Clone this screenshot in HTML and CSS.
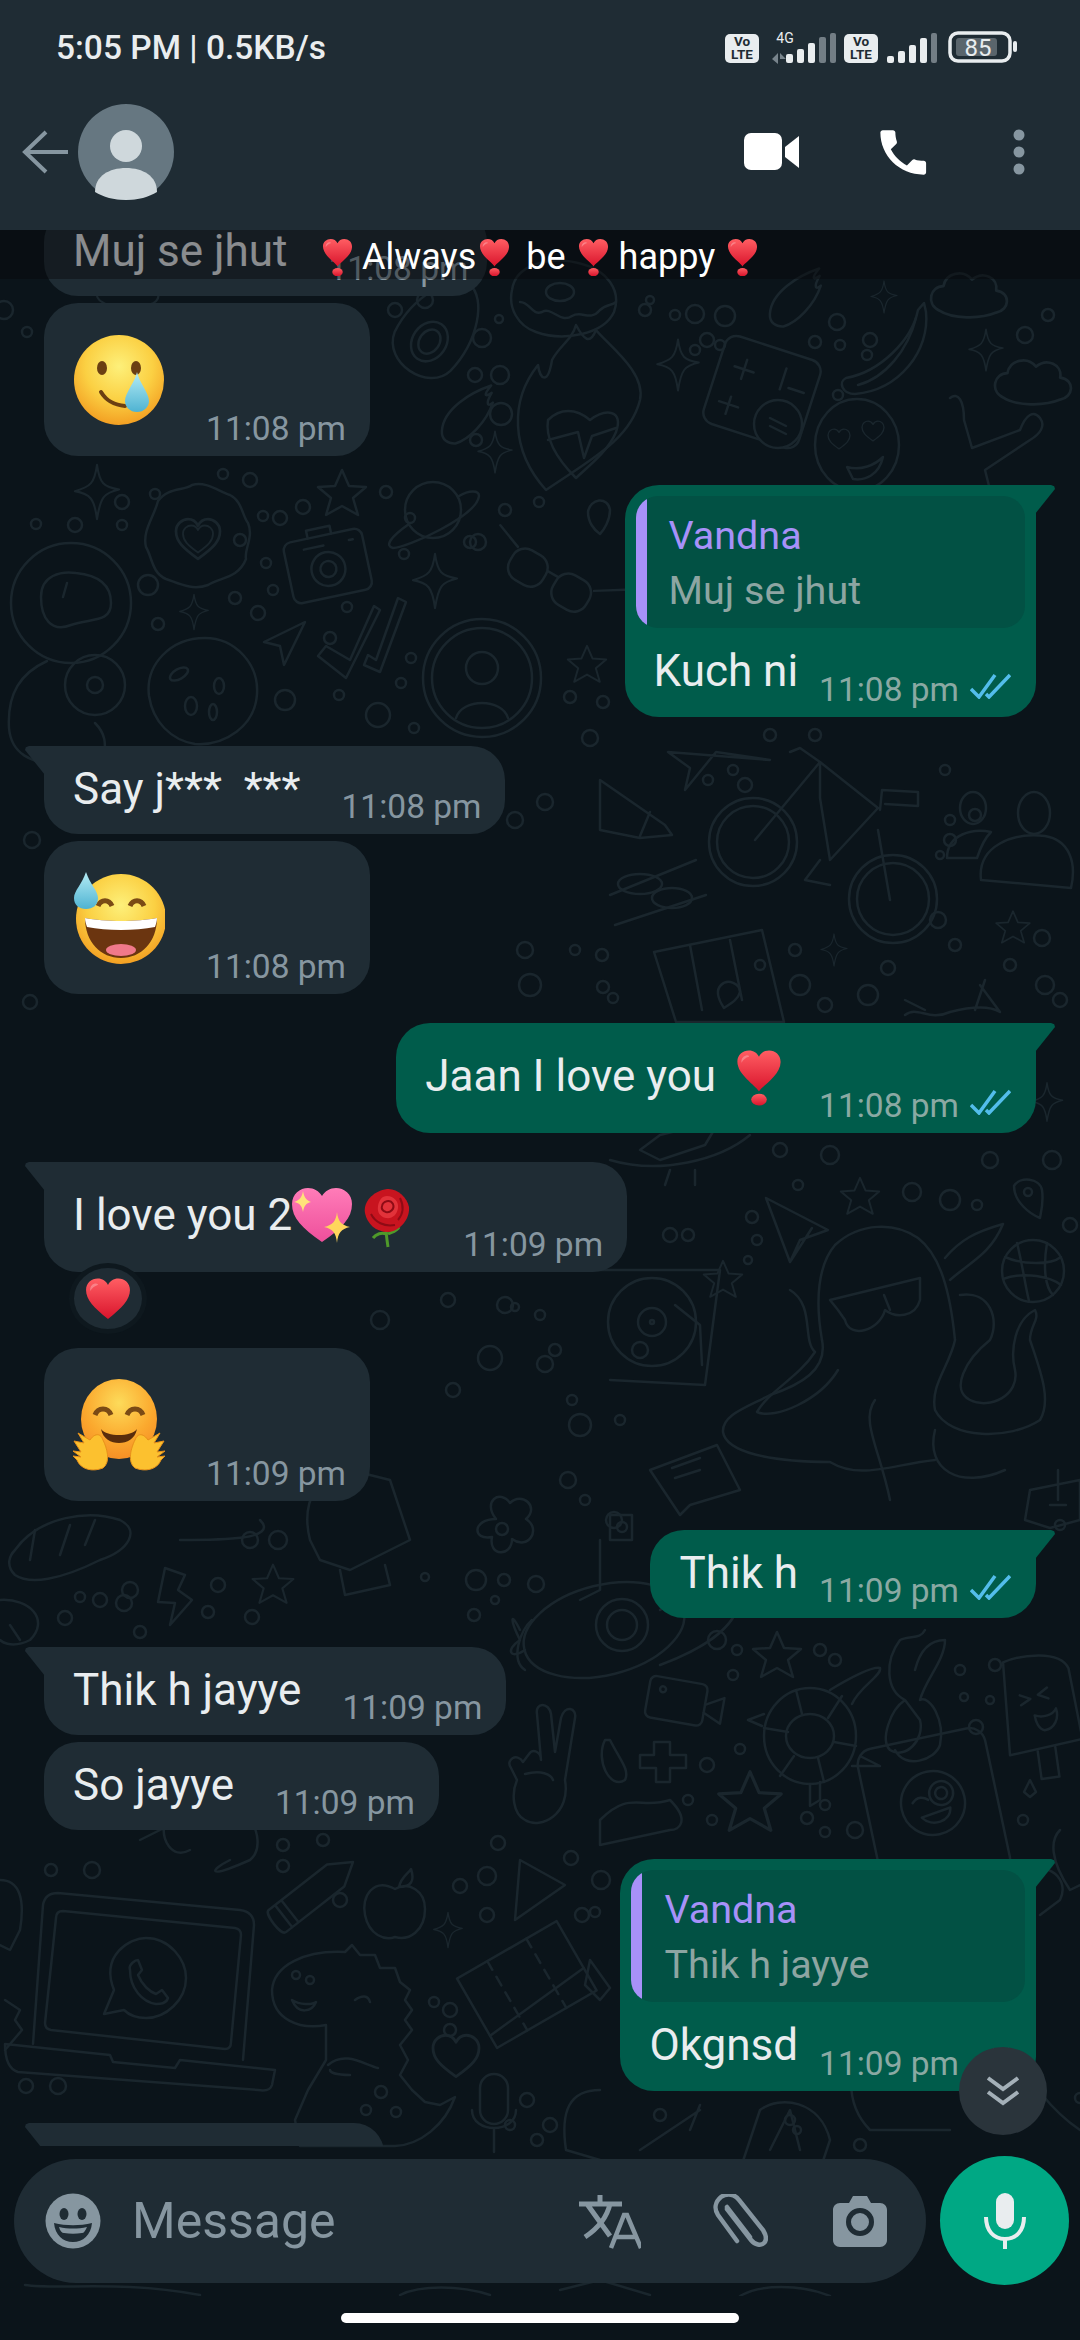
FILE: index.html
```html
<!DOCTYPE html>
<html lang="en">
<head>
    <meta charset="UTF-8">
    <meta name="viewport" content="width=device-width, initial-scale=1.0">
    <title>Chat</title>
    <link rel="stylesheet" href="styles.css">
</head>
<body>
    <!-- shared gradients and emoji -->
    <svg class="defs" aria-hidden="true">
        <defs>
            <radialGradient id="faceFill" cx="50%" cy="35%" r="68%">
                <stop offset="0" stop-color="#fdf07a"/>
                <stop offset=".55" stop-color="#fbd043"/>
                <stop offset="1" stop-color="#f29a1f"/>
            </radialGradient>
            <linearGradient id="redFill" x1="0" y1="0" x2="0" y2="1">
                <stop offset="0" stop-color="#ff5e63"/>
                <stop offset="1" stop-color="#d9142c"/>
            </linearGradient>
            <linearGradient id="pinkFill" x1="0" y1="0" x2="0" y2="1">
                <stop offset="0" stop-color="#ff7cb8"/>
                <stop offset="1" stop-color="#ee4f9b"/>
            </linearGradient>
            <linearGradient id="dropFill" x1="0" y1="0" x2="0" y2="1">
                <stop offset="0" stop-color="#b4ecf5"/>
                <stop offset="1" stop-color="#4fb3d2"/>
            </linearGradient>
            <radialGradient id="hugFill" cx="50%" cy="30%" r="75%">
                <stop offset="0" stop-color="#fddb5a"/>
                <stop offset=".6" stop-color="#fba92e"/>
                <stop offset="1" stop-color="#f58a24"/>
            </radialGradient>
            <symbol id="heart" viewBox="0 0 100 92">
                <path fill="url(#redFill)" d="M50 90C20 66 3 49 3 28 3 12 15 3 28 3c10 0 18 5 22 14C54 8 62 3 72 3c13 0 25 9 25 25 0 21-17 38-47 62Z"/>
                <path fill="#fff" opacity=".28" d="M22 14c-8 2-11 9-10 16 4-7 9-11 16-13 2-2-2-4-6-3Z"/>
            </symbol>
            <symbol id="heartMark" viewBox="0 0 100 126">
                <path fill="url(#redFill)" d="M50 92C42 78 3 56 3 27 3 12 15 3 28 3c10 0 18 5 22 14C54 8 62 3 72 3c13 0 25 9 25 25 0 29-39 51-47 64Z"/>
                <ellipse fill="url(#redFill)" cx="50" cy="110" rx="17" ry="13"/>
                <path fill="#fff" opacity=".28" d="M22 14c-8 2-11 9-10 16 4-7 9-11 16-13 2-2-2-4-6-3Z"/>
            </symbol>
        </defs>
    </svg>

    <header class="header">
        <div class="status">
            <span class="status-text">5:05 PM | 0.5KB/s</span>
            <svg class="status-icons" width="294" height="34" viewBox="0 0 294 34">
                <rect x="1" y="4" width="34" height="29" rx="5" fill="#e9edef"/>
                <text x="18" y="16" class="lte">Vo</text>
                <text x="18" y="29" class="lte">LTE</text>
                <text x="61" y="13" class="four-g">4G</text>
                <path d="M48 29l6-6v11zM56 23l6 6h-6z" fill="#78848c"/>
                <rect x="62" y="24" width="7" height="9" rx="2" fill="#e9edef"/>
                <rect x="73" y="19" width="7" height="14" rx="2" fill="#e9edef"/>
                <rect x="84" y="13" width="7" height="20" rx="2" fill="#e9edef"/>
                <rect x="95" y="7" width="7" height="26" rx="2" fill="#737e85"/>
                <rect x="106" y="3" width="6" height="30" rx="2" fill="#737e85"/>
                <rect x="120" y="4" width="34" height="29" rx="5" fill="#e9edef"/>
                <text x="137" y="16" class="lte">Vo</text>
                <text x="137" y="29" class="lte">LTE</text>
                <rect x="163" y="26" width="7" height="7" rx="2" fill="#e9edef"/>
                <rect x="174" y="21" width="7" height="12" rx="2" fill="#e9edef"/>
                <rect x="185" y="15" width="7" height="18" rx="2" fill="#e9edef"/>
                <rect x="196" y="8" width="7" height="25" rx="2" fill="#e9edef"/>
                <rect x="207" y="3" width="6" height="30" rx="2" fill="#737e85"/>
                <rect x="226" y="3" width="60" height="28" rx="8" fill="none" stroke="#e9edef" stroke-width="3.5"/>
                <rect x="232" y="8" width="41" height="18" rx="3" fill="#5a656c"/>
                <text x="254" y="26" class="batt">85</text>
                <rect x="289" y="11" width="4" height="11" rx="2" fill="#e9edef"/>
            </svg>
        </div>
        <div class="toolbar">
            <svg class="back" width="46" height="44" viewBox="0 0 46 44"><path d="M24 2L3 22l21 20M3 22h43" fill="none" stroke="#8696a0" stroke-width="4"/></svg>
            <svg class="avatar" width="96" height="96" viewBox="0 0 96 96">
                <circle cx="48" cy="48" r="48" fill="#667781"/>
                <ellipse cx="48" cy="42" rx="16" ry="16" fill="#cfd8dc"/>
                <path d="M17 88c0-16 14-24 31-24s31 8 31 24c-8 5-19 8-31 8s-23-3-31-8Z" fill="#cfd8dc"/>
            </svg>
            <div class="tool-icons">
                <svg width="56" height="38" viewBox="0 0 56 38"><rect x="0" y="0" width="38" height="37" rx="7" fill="#fff"/><path d="M41 14L55 3v32L41 24z" fill="#fff"/></svg>
                <svg class="tool-phone" width="59" height="59" viewBox="0 0 24 24"><path fill="#fff" d="M20.6 15.4c-1.2 0-2.5-.2-3.6-.6-.35-.1-.75-.03-1 .25l-2.2 2.2c-2.8-1.45-5.1-3.7-6.55-6.55l2.2-2.2c.3-.3.35-.65.25-1-.4-1.1-.6-2.4-.6-3.6 0-.55-.45-1-1-1H4c-.55 0-1 .45-1 1C3 13.3 10.7 21 20.6 21c.55 0 1-.45 1-1v-3.6c0-.55-.45-1-1-1Z"/></svg>
                <svg class="tool-dots" width="12" height="46" viewBox="0 0 12 46"><circle cx="6" cy="6" r="5.5" fill="#8696a0"/><circle cx="6" cy="23" r="5.5" fill="#8696a0"/><circle cx="6" cy="40" r="5.5" fill="#8696a0"/></svg>
            </div>
        </div>
    </header>

    <main class="chat">
        <!-- wallpaper, drawn at page coordinates -->
        <svg class="wallpaper" width="1080" height="2066" viewBox="0 230 1080 2066" aria-hidden="true">
            <defs>
                <path id="sp" d="M0-32C3-10 8-6 26-3 8 1 4 6 0 32-3 8-8 2-26-1-8-6-3-10 0-32Z"/>
                <path id="st" d="M0-24L7-8 24-7 11 4 16 21 0 12-16 21-11 4-24-7-7-8Z"/>
                <path id="ht" d="M0 18C-14 8-20 2-20-7-20-14-14-18-9-18-5-18-2-16 0-12 2-16 5-18 9-18 14-18 20-14 20-7 20 2 14 8 0 18Z"/>
                <path id="cl" d="M-30 14C-42 8-38-8-26-8-24-20-8-24 0-14 10-22 24-16 22-4 36-2 34 14 22 16 8 22-18 22-30 14Z"/>
            </defs>
            <g fill="none" stroke="#1a262d" stroke-width="2.5" stroke-linejoin="round" stroke-linecap="round">
                <!-- top right -->
                <g transform="translate(564,298)"><path d="M-52-8C-48-36-10-42 18-34 42-28 58-8 50 14 40 36 0 44-28 34-46 28-56 10-52-8Z"/><ellipse cx="-4" cy="-6" rx="14" ry="9"/><path d="M-44 4C-34 4-32 18-22 14-12 8-4 26 8 18 18 12 26 24 36 12 42 6 48 8 52 4"/></g>
                <g transform="translate(434,335) rotate(35)"><path d="M-34 20C-40-20-20-60 0-62 22-60 40-20 34 20 28 50-26 52-34 20Z"/><ellipse cx="0" cy="8" rx="17" ry="21"/><ellipse cx="0" cy="8" rx="10" ry="13"/></g>
                <g transform="translate(797,295) rotate(30)"><path d="M-14 30C-24 10-8-18 6-34 4-22 6-20 10-28 10-14 14-14 16-20 20 0 14 24 4 34-2 38-10 38-14 30Z"/></g>
                <g transform="translate(469,412) rotate(30)"><path d="M-14 30C-24 10-8-18 6-34 4-22 6-20 10-28 10-14 14-14 16-20 20 0 14 24 4 34-2 38-10 38-14 30Z"/></g>
                <path d="M846 378C880 372 912 340 918 310L924 303 926 312C930 350 900 390 855 394 842 394 838 382 846 378Z"/>
                <path d="M858 385C885 378 908 350 916 318"/>
                <use href="#cl" transform="translate(972,295) scale(1.1)"/>
                <use href="#cl" transform="translate(1036,382) scale(1.1)"/>
                <use href="#cl" transform="translate(130,290) scale(.9)"/>
                <g transform="translate(762,392) rotate(18)"><rect x="-50" y="-46" width="100" height="92" rx="12"/><path d="M-24-26V-6M-34-16H-14M16-30V-8M-28 14V32M-38 22H-18M24-12h16"/></g>
                <g transform="translate(778,424)"><circle r="24" fill="#0b141a"/><path d="M-8-6L8 2M-8 2L8 10"/></g>
                <path d="M546 490C510 450 510 400 538 365 540 380 548 385 552 360 560 345 572 340 576 325 584 340 590 345 596 330 608 345 646 372 640 400 630 440 590 460 546 490Z"/>
                <path d="M548 420C560 408 576 408 590 420 606 408 624 410 616 432 608 452 586 468 576 478 566 468 544 445 548 420Z"/>
                <path d="M548 440l30-8 6 26 8-22 24-8"/>
                <g transform="translate(857,445)"><ellipse rx="42" ry="46"/><use href="#ht" transform="translate(-18,-6) scale(.55)"/><use href="#ht" transform="translate(16,-14) scale(.55)"/><path d="M-10 22C4 26 18 20 26 12 22 30 8 36-4 34Z"/></g>
                <path d="M950 398C958 392 964 400 964 420L972 448 1020 430C1026 414 1034 410 1040 418 1046 426 1040 434 1030 440L985 470 990 490"/>
                <use href="#sp" transform="translate(678,365) scale(.8)"/>
                <use href="#sp" transform="translate(986,350) scale(.65)"/>
                <use href="#sp" transform="translate(884,297) scale(.5)"/>
                <use href="#sp" transform="translate(495,452) scale(.65)"/>
                <!-- astronaut, cookie row -->
                <g transform="translate(71,603)"><ellipse rx="60" ry="60"/><path d="M-30-6C-30-28-10-32 5-30 25-28 40-20 40 0 40 20 20 15 0 22-20 30-30 15-30-6Z"/><path d="M-8-6L-4-20M-24 58C-50 70-64 90-62 125-60 150-40 162-10 160L32 158C36 140 34 130 24 120"/><circle cx="24" cy="82" r="30"/><circle cx="24" cy="82" r="8"/></g>
                <g transform="translate(198,537)"><path d="M-40-36C-30-50-14-46-6-52 8-56 20-46 32-42 44-36 44-22 50-14 56 0 46 12 48 22 40 42 22 40 10 48-6 54-20 46-32 42-46 36-46 20-52 10-56-6-44-20-40-36Z"/><use href="#ht" transform="translate(0,2) scale(1.1)"/><use href="#ht" transform="translate(0,2) scale(.75)"/></g>
                <g transform="translate(433,510)"><circle r="28"/><path d="M-24 14C-44 28-48 36-40 38-26 38 44 6 46-14 46-20 36-20 26-14"/></g>
                <g transform="translate(328,567) rotate(-12)"><rect x="-40" y="-32" width="80" height="62" rx="8"/><circle r="17" cy="2"/><circle r="8" cy="2"/><path d="M-14-32V-40H10V-32M-20-22H0M26-22h4"/></g>
                <g transform="translate(549,581) rotate(30)"><rect x="-44" y="-18" width="38" height="34" rx="14"/><rect x="6" y="-18" width="38" height="34" rx="14"/><path d="M-6-8H6M-44-14L-70-24M44-14L76-34"/></g>
                <g transform="translate(482,678)"><circle r="59"/><circle r="50"/><circle r="16" cy="-10"/><path d="M-26 40C-20 20 20 20 26 40"/></g>
                <path d="M318 656L346 678 380 610 374 606 350 660 326 646ZM364 665L380 672 406 602 398 598 376 660 368 655Z"/>
                <path d="M264 642L305 622 284 665 280 646Z"/>
                <g transform="translate(201,688)"><path d="M-52 8C-56-24-30-50 4-50 34-50 58-24 56 6 54 38 24 58-6 56-30 52-48 34-52 8Z"/><ellipse cx="-22" cy="-14" rx="10" ry="5" transform="rotate(-30 -22 -14)"/><ellipse cx="18" cy="-2" rx="5" ry="8"/><ellipse cx="-10" cy="18" rx="6" ry="9"/><ellipse cx="12" cy="24" rx="4" ry="8"/></g>
                <use href="#sp" transform="translate(97,492) scale(.85)"/>
                <use href="#sp" transform="translate(435,581) scale(.85)"/>
                <use href="#sp" transform="translate(194,612) scale(.55)"/>
                <use href="#st" transform="translate(342,494) scale(1)"/>
                <use href="#st" transform="translate(587,665) scale(.8)"/>
                <path d="M588 512C590 498 608 496 610 510 610 520 604 530 600 534 594 530 588 522 588 512Z"/>
                <!-- bicycle and friends -->
                <g transform="translate(753,842)"><circle r="44"/><circle r="36"/></g>
                <g transform="translate(893,899)"><circle r="44"/><circle r="36"/></g>
                <path d="M755 840L820 762 800 748 790 752M820 762L878 808 830 860 820 798ZM880 810L882 790 918 792 918 806 885 804M878 830L890 900M820 860L805 880 830 885"/>
                <path d="M600 780L665 825 672 835 640 838 600 830ZM640 836L650 812"/>
                <path d="M610 895L696 860M615 925L706 895"/>
                <ellipse cx="640" cy="884" rx="22" ry="10"/><ellipse cx="672" cy="898" rx="20" ry="10"/>
                <path d="M654 952L762 930 784 1022 676 1022ZM690 945L702 1010M730 940L742 1000"/>
                <path d="M721 985C728 978 740 984 740 992 738 1000 730 1004 724 1008 720 1002 714 992 721 985Z"/>
                <g transform="translate(1013,858)"><ellipse cx="-40" cy="-50" rx="13" ry="16"/><ellipse cx="21" cy="-45" rx="16" ry="21"/><path d="M-66 0C-66-24-40-30-22-26-30-18-34-6-36 0ZM-32 22C-36-12 0-26 32-22 56-18 64 4 58 30Z"/></g>
                <path d="M905 1015C918 1005 928 1022 950 1012 974 1006 990 1006 1000 1012L980 985M905 1000L925 1010M975 1010L985 980"/>
                <path d="M770 760L716 752 685 790 690 768 668 752Z"/>
                <use href="#sp" transform="translate(834,950) scale(.5)"/>
                <use href="#st" transform="translate(1013,928) scale(.7)"/>
                <!-- between right bubbles -->
                <path d="M610 1160C660 1175 720 1160 750 1135M640 1150L660 1135 720 1120 705 1145 660 1160ZM665 1185l5-15M695 1185v-15"/>
                <use href="#st" transform="translate(860,1197) scale(.8)"/>
                <path d="M1014 1186C1020 1176 1040 1178 1042 1190 1044 1204 1040 1216 1040 1218 1030 1214 1014 1202 1014 1186Z"/><circle cx="1028" cy="1192" r="4"/>
                <path d="M766 1198L828 1230 800 1240 790 1262ZM790 1262L812 1228"/>
                <g transform="translate(1033,1271)"><ellipse rx="31" ry="31"/><path d="M-28-14C-10-6 18-6 28-14M-30 8C-8 0 18 6 28 14M-16-28C-10-4-8 14-4 30M14-28C10-4 12 16 20 24"/></g>
                <use href="#sp" transform="translate(1047,1102) scale(.6)"/>
                <!-- octopus -->
                <path d="M822 1340C815 1300 818 1265 835 1245 860 1222 895 1222 918 1238 940 1255 950 1290 955 1340"/>
                <path d="M830 1300L920 1278 920 1300C915 1318 895 1318 885 1310 880 1330 850 1340 845 1320L838 1310ZM884 1295L890 1310"/>
                <path d="M822 1340C828 1370 800 1385 770 1395 745 1408 722 1415 723 1432 726 1452 770 1462 830 1462"/>
                <path d="M790 1290C815 1305 802 1340 815 1352 798 1378 770 1390 757 1412 775 1420 820 1400 838 1370"/>
                <path d="M955 1340C950 1365 930 1385 935 1410 950 1440 1010 1440 1040 1420 1052 1400 1040 1370 1030 1340 1030 1325 1040 1320 1035 1310 1015 1320 1010 1350 1015 1370 1020 1395 990 1410 970 1400 950 1390 965 1360 990 1340 1000 1320 990 1290 960 1295"/>
                <path d="M950 1280C970 1262 990 1255 1003 1224 975 1232 960 1240 945 1258"/>
                <path d="M935 1430C925 1470 960 1490 1005 1470M875 1400C860 1420 880 1450 890 1500M830 1462C860 1480 890 1465 935 1460"/>
                <!-- record player -->
                <path d="M600 1270L720 1270 705 1385 610 1380"/><circle cx="652" cy="1322" r="44"/><circle cx="652" cy="1322" r="14"/><circle cx="652" cy="1322" r="2"/>
                <path d="M675 1305L700 1325 702 1365"/><use href="#st" transform="translate(723,1280) scale(.8)"/>
                <path d="M650 1470L717 1445 740 1490 690 1505 680 1515 670 1500ZM672 1468L700 1458M675 1478L700 1470"/>
                <path d="M1030 1490L1080 1480V1520L1050 1528 1025 1520ZM1058 1470V1500M1050 1505h16"/>
                <!-- left column lower -->
                <path d="M15 1550C40 1515 90 1510 120 1520 140 1530 130 1550 100 1560 60 1580 30 1585 15 1575 5 1565 10 1555 15 1550Z"/>
                <path d="M30 1560L35 1530M60 1555L70 1525M85 1545L95 1520"/>
                <path d="M165 1568L185 1575 178 1590 192 1600 170 1625 175 1603 158 1602Z"/>
                <use href="#st" transform="translate(273,1585) scale(.85)"/>
                <g transform="translate(502,1529)"><path d="M-6-10C-20-28-2-40 8-26 20-38 38-22 24-10 40 0 26 22 10 10 10 28-14 28-10 8-30 12-30-10-6-10Z"/><circle r="6"/></g>
                <path d="M310 1540C300 1500 320 1470 350 1470L390 1480 410 1540 350 1570 320 1560ZM340 1570L345 1595 390 1585 385 1565"/>
                <path d="M0 1600C30 1598 50 1620 30 1640 10 1650 0 1640 0 1640M10 1625L20 1640"/>
                <path d="M260 1520C280 1540 220 1540 180 1540"/>
                <!-- plane, propeller -->
                <path d="M660 1610C690 1590 730 1580 740 1600 735 1630 700 1650 660 1665M532 1620C520 1630 510 1660 525 1670"/>
                <g transform="translate(604,1630)"><ellipse rx="82" ry="45" transform="rotate(-14)"/><circle cx="18" cy="-5" r="26"/><circle cx="18" cy="-5" r="15"/></g>
                <path d="M520 1630C510 1610 510 1620 520 1640 505 1650 510 1660 525 1650"/>
                <path d="M600 1540V1590L580 1600M610 1515h22v25h-22z"/>
                <g transform="translate(810,1736)"><ellipse rx="46" ry="48"/><ellipse rx="24" ry="22"/><path d="M-22-4L-46-8M-8-22L-14-46M18-18L32-40M24 6L46 10M8 22L14 46M-16 20L-30 40M-48-10L-62-16-46-22M0 48V70L10 64V46M42 30L70 30 50 20M20-46C30-52 60-70 70-68 72-60 50-50 42-32"/></g>
                <path d="M905 1700C885 1690 885 1660 900 1640 910 1635 920 1640 925 1630M905 1700C890 1710 880 1740 890 1750 905 1760 925 1740 920 1720ZM920 1700C930 1695 945 1720 940 1745 935 1760 905 1770 895 1750M920 1700C925 1680 945 1660 945 1640 930 1640 920 1650 915 1670"/>
                <g transform="translate(1037,1703) rotate(-8)"><path d="M-28-45C-10-50 30-50 36-30L40 42-34 48Z"/><path d="M-6 48V76H12V46M-16-10l10 5-10 5M12-14l-10 6 10 5M-4 12C4 16 14 14 18 8 20 18 14 28 4 28-2 26-4 18-4 12Z"/></g>
                <g transform="translate(683,1703) rotate(10)"><rect x="-36" y="-22" width="58" height="42" rx="6"/><path d="M22-2L40-12V14L22 6"/><circle cx="-22" cy="-10" r="3"/></g>
                <path d="M654 1742V1755H640V1768H656V1782H670V1768H686V1755H670V1742Z"/>
                <path d="M610 1740C620 1760 630 1770 625 1780 610 1790 595 1760 605 1740Z"/>
                <use href="#st" transform="translate(750,1803) scale(1.3)"/>
                <use href="#st" transform="translate(777,1656) scale(1)"/>
                <g transform="translate(933,1803) rotate(-12)"><rect x="-66" y="-66" width="130" height="150" rx="16"/><circle r="32"/><circle cx="10" cy="-8" r="6"/><circle cx="10" cy="-8" r="12"/><path d="M-20-4C-14-10-8-8-4-4M-14 12L16 8C14 22-6 24-14 12Z"/></g>
                <path d="M600 1820C630 1790 640 1810 670 1800 690 1820 680 1830 670 1830L600 1845Z"/>
                <path d="M1030 1780l-6 12 6 5 6-5Z"/>
                <path d="M1060 1830C1050 1840 1050 1860 1070 1890L1080 1885"/>
                <!-- laptop, logo, dino -->
                <path d="M33 2044L43 1905Q45 1893 58 1893L240 1910Q254 1912 254 1925L243 2060"/>
                <path d="M56 1918Q56 1911 63 1911L235 1928Q241 1929 241 1935L231 2042Q231 2049 225 2049L51 2030Q45 2029 45 2023Z"/>
                <path d="M5 2044L110 2055 113 2062 175 2068 180 2060 275 2070 272 2085Q270 2092 258 2090L18 2072Q5 2068 5 2044Z"/>
                <path d="M104 2014L114 1990C100 1955 130 1938 146 1938 170 1938 186 1960 186 1978 186 2000 166 2018 146 2018 134 2018 128 2014 124 2010Z"/>
                <path d="M130 1970C128 1964 136 1960 138 1960L142 1970 138 1975C142 1985 150 1992 156 1994L162 1990 168 1998C166 2004 160 2004 156 2004 142 2002 130 1988 130 1970Z"/>
                <path d="M326 2025C300 2030 272 2020 272 1990 274 1965 305 1950 345 1952 L352 1945 360 1955 375 1955 380 1968 395 1968 400 1982 410 1990 405 2000 412 2010 405 2020 412 2030 400 2045 408 2060 400 2075 412 2090 425 2102 440 2105 455 2097C445 2125 420 2145 395 2146H300L295 2120 308 2090 326 2060Z"/>
                <path d="M292 2000C300 2005 312 2005 316 2002 312 2012 298 2015 292 2000ZM355 2000C362 1995 368 1995 370 2002M328 2065C345 2050 365 2065 378 2068M330 2070C330 2072 335 2075 350 2075"/>
                <circle cx="296" cy="1975" r="4"/><circle cx="310" cy="1980" r="4"/>
                <g transform="translate(312,1894) rotate(-38)"><path d="M-44-14H30L52 0 30 14H-44C-50 14-50-14-44-14ZM-28-14V14M-36-14V14"/></g>
                <g transform="translate(395,1911)"><path d="M0-22C-22-34-34-14-30 4-26 24-10 30 0 26 14 30 30 20 30-2 30-20 14-30 0-22ZM4-24C6-34 14-38 16-42 20-30 16-24 4-24Z"/></g>
                <g transform="translate(541,1774)"><path d="M-24 6L-30-6C-36-14-24-22-18-12L-12-20C-8-26 0-22 0-14L-4-60C-6-72 8-72 10-60L14-22 20-56C24-70 36-66 34-56L24 6C30 40 0 56-16 46-28 40-30 20-24 6ZM-16 0C0-4 10 0 12 6"/></g>
                <g transform="translate(530,1985) rotate(-30)"><rect x="-60" y="-42" width="115" height="80"/><path d="M-25-42V38M20-42V38" stroke-dasharray="10 8"/><path d="M-60 24L55 12"/></g>
                <use href="#ht" transform="translate(456,2056) scale(1.15)"/>
                <g transform="translate(494,2106)"><rect x="-14" y="-32" width="28" height="50" rx="14"/><path d="M-22 4C-22 28 22 28 22 4M0 24V46"/></g>
                <use href="#sp" transform="translate(448,1930) scale(.55)"/>
                <path d="M520 1860L565 1885 515 1920Z"/>
                <path d="M190 1850C172 1860 160 1840 165 1820M230 1860C210 1870 205 1880 250 1860 262 1850 258 1830 250 1820M140 1840L200 1810"/>
                <path d="M590 1960L610 1988 600 2000 585 1985ZM0 1880C20 1880 25 1900 20 1930L10 1950 0 1945"/>
                <path d="M5 2000L20 2010 15 2020 22 2030 5 2050"/>
                <path d="M600 2090C570 2090 560 2110 566 2150L600 2160"/>
                <path d="M640 2150L700 2110M680 2090H780L830 2060M700 2105L690 2130"/>
                <path d="M740 2170L760 2110C780 2095 820 2100 830 2140L820 2170M770 2150L790 2110 800 2150"/>
                <path d="M870 2030C850 2050 840 2100 870 2130H950"/>
                <path d="M1010 2050C1030 2080 1050 2110 1080 2130M1020 1870C1050 1860 1070 1880 1060 1900L1040 1915"/>
                <!-- low band -->
                <path d="M25 2285C60 2290 120 2280 200 2295M400 2295C420 2285 460 2285 490 2295M560 2290L600 2280 650 2295M740 2296C760 2284 800 2284 830 2296"/>
                <!-- small bubbles -->
                <g>
                    <circle cx="4" cy="310" r="9"/><circle cx="27" cy="332" r="5"/><circle cx="395" cy="310" r="7"/><circle cx="425" cy="300" r="8"/><circle cx="482" cy="338" r="9"/><circle cx="499" cy="319" r="4"/><circle cx="475" cy="375" r="7"/><circle cx="500" cy="375" r="9"/><circle cx="476" cy="440" r="6"/><circle cx="501" cy="414" r="11"/>
                    <circle cx="675" cy="315" r="5"/><circle cx="695" cy="314" r="9"/><circle cx="725" cy="316" r="10"/><circle cx="707" cy="340" r="7"/><circle cx="720" cy="345" r="5"/><circle cx="645" cy="310" r="6"/><circle cx="695" cy="350" r="5"/><circle cx="650" cy="300" r="4"/><circle cx="837" cy="322" r="8"/><circle cx="815" cy="342" r="6"/><circle cx="840" cy="345" r="5"/><circle cx="870" cy="340" r="7"/><circle cx="838" cy="395" r="5"/><circle cx="867" cy="355" r="5"/><circle cx="1025" cy="335" r="8"/><circle cx="1048" cy="315" r="6"/>
                    <circle cx="1060" cy="1000" r="7"/><circle cx="240" cy="540" r="6"/><circle cx="250" cy="480" r="7"/><circle cx="280" cy="518" r="7"/><circle cx="303" cy="507" r="7"/><circle cx="263" cy="516" r="5"/><circle cx="223" cy="474" r="5"/><circle cx="386" cy="492" r="6"/><circle cx="122" cy="502" r="7"/><circle cx="155" cy="494" r="5"/><circle cx="148" cy="585" r="10"/><circle cx="36" cy="524" r="5"/><circle cx="75" cy="525" r="7"/><circle cx="122" cy="525" r="5"/>
                    <circle cx="266" cy="563" r="5"/><circle cx="273" cy="590" r="5"/><circle cx="235" cy="598" r="6"/><circle cx="258" cy="613" r="7"/><circle cx="158" cy="624" r="6"/><circle cx="347" cy="607" r="5"/><circle cx="330" cy="638" r="6"/><circle cx="470" cy="542" r="6"/><circle cx="478" cy="542" r="8"/><circle cx="404" cy="554" r="5"/><circle cx="410" cy="518" r="5"/><circle cx="505" cy="510" r="6"/><circle cx="539" cy="502" r="5"/><circle cx="411" cy="658" r="5"/><circle cx="401" cy="683" r="5"/><circle cx="339" cy="695" r="5"/><circle cx="285" cy="700" r="10"/><circle cx="378" cy="715" r="12"/><circle cx="414" cy="728" r="5"/><circle cx="570" cy="697" r="6"/><circle cx="603" cy="702" r="6"/><circle cx="590" cy="738" r="8"/>
                    <circle cx="32" cy="840" r="8"/><circle cx="515" cy="820" r="8"/><circle cx="545" cy="802" r="8"/><circle cx="30" cy="1002" r="7"/><circle cx="525" cy="950" r="8"/><circle cx="575" cy="950" r="5"/><circle cx="602" cy="955" r="6"/><circle cx="530" cy="985" r="11"/><circle cx="603" cy="987" r="6"/><circle cx="613" cy="998" r="5"/>
                    <circle cx="708" cy="780" r="5"/><circle cx="745" cy="785" r="7"/><circle cx="770" cy="735" r="6"/><circle cx="815" cy="735" r="6"/><circle cx="733" cy="770" r="5"/><circle cx="945" cy="770" r="5"/><circle cx="950" cy="820" r="5"/><circle cx="950" cy="840" r="6"/><circle cx="940" cy="855" r="4"/><circle cx="975" cy="815" r="6"/><circle cx="938" cy="920" r="8"/><circle cx="955" cy="945" r="6"/><circle cx="1042" cy="938" r="8"/><circle cx="1045" cy="985" r="9"/><circle cx="1010" cy="965" r="6"/><circle cx="760" cy="965" r="5"/><circle cx="795" cy="950" r="6"/><circle cx="800" cy="985" r="10"/><circle cx="825" cy="1005" r="7"/><circle cx="868" cy="995" r="10"/><circle cx="888" cy="968" r="7"/>
                    <circle cx="780" cy="1150" r="7"/><circle cx="798" cy="1185" r="5"/><circle cx="830" cy="1155" r="9"/><circle cx="912" cy="1192" r="9"/><circle cx="950" cy="1200" r="10"/><circle cx="977" cy="1205" r="5"/><circle cx="990" cy="1160" r="8"/><circle cx="1052" cy="1160" r="9"/><circle cx="1070" cy="1225" r="7"/><circle cx="670" cy="1235" r="7"/><circle cx="688" cy="1235" r="6"/><circle cx="752" cy="1217" r="6"/><circle cx="757" cy="1240" r="5"/><circle cx="748" cy="1260" r="4"/>
                    <circle cx="435" cy="1232" r="11"/><circle cx="380" cy="1320" r="9"/><circle cx="448" cy="1300" r="7"/><circle cx="490" cy="1358" r="12"/><circle cx="545" cy="1364" r="8"/><circle cx="453" cy="1390" r="7"/><circle cx="505" cy="1305" r="8"/><circle cx="515" cy="1307" r="4"/><circle cx="555" cy="1350" r="6"/><circle cx="540" cy="1315" r="5"/><circle cx="572" cy="1400" r="5"/><circle cx="580" cy="1425" r="11"/><circle cx="568" cy="1480" r="8"/><circle cx="585" cy="1500" r="5"/><circle cx="620" cy="1420" r="5"/><circle cx="640" cy="1350" r="8"/>
                    <circle cx="250" cy="1540" r="8"/><circle cx="278" cy="1540" r="9"/><circle cx="130" cy="1590" r="8"/><circle cx="218" cy="1585" r="7"/><circle cx="100" cy="1600" r="7"/><circle cx="124" cy="1603" r="8"/><circle cx="80" cy="1597" r="5"/><circle cx="65" cy="1618" r="7"/><circle cx="140" cy="1632" r="6"/><circle cx="208" cy="1612" r="6"/><circle cx="252" cy="1617" r="7"/><circle cx="476" cy="1580" r="10"/><circle cx="504" cy="1580" r="6"/><circle cx="536" cy="1584" r="8"/><circle cx="495" cy="1600" r="4"/><circle cx="474" cy="1615" r="6"/><circle cx="425" cy="1577" r="4"/>
                    <circle cx="283" cy="1845" r="6"/><circle cx="323" cy="1840" r="6"/><circle cx="498" cy="1843" r="7"/><circle cx="571" cy="1858" r="7"/><circle cx="601" cy="1880" r="9"/><circle cx="487" cy="1876" r="9"/><circle cx="460" cy="1886" r="7"/><circle cx="487" cy="1915" r="7"/><circle cx="595" cy="1912" r="5"/><circle cx="582" cy="1915" r="7"/><circle cx="283" cy="1866" r="6"/><circle cx="51" cy="1870" r="6"/><circle cx="92" cy="1870" r="8"/><circle cx="340" cy="1900" r="7"/><circle cx="434" cy="2002" r="5"/><circle cx="450" cy="2010" r="7"/><circle cx="450" cy="2030" r="6"/><circle cx="381" cy="2092" r="6"/><circle cx="366" cy="2110" r="5"/><circle cx="396" cy="2112" r="5"/><circle cx="527" cy="2100" r="7"/><circle cx="550" cy="2125" r="7"/><circle cx="537" cy="2140" r="6"/><circle cx="58" cy="2086" r="8"/><circle cx="26" cy="2086" r="7"/>
                    <circle cx="717" cy="1640" r="9"/><circle cx="737" cy="1650" r="5"/><circle cx="733" cy="1675" r="5"/><circle cx="820" cy="1650" r="6"/><circle cx="835" cy="1660" r="6"/><circle cx="960" cy="1670" r="5"/><circle cx="995" cy="1665" r="6"/><circle cx="964" cy="1697" r="4"/><circle cx="990" cy="1700" r="4"/><circle cx="976" cy="1727" r="7"/><circle cx="707" cy="1765" r="7"/><circle cx="740" cy="1749" r="5"/><circle cx="688" cy="1800" r="5"/><circle cx="712" cy="1820" r="5"/><circle cx="807" cy="1818" r="6"/><circle cx="825" cy="1805" r="5"/><circle cx="825" cy="1832" r="5"/><circle cx="855" cy="1830" r="8"/><circle cx="1023" cy="1820" r="5"/><circle cx="614" cy="1520" r="8"/><circle cx="622" cy="1527" r="5"/><circle cx="1060" cy="1525" r="5"/>
                    <circle cx="660" cy="2115" r="6"/><circle cx="790" cy="2120" r="5"/><circle cx="1080" cy="2098" r="5"/><circle cx="510" cy="2125" r="5"/><circle cx="1030" cy="2200" r="6"/><circle cx="860" cy="2145" r="6"/><circle cx="797" cy="2130" r="4"/>
                </g>
            </g>
        </svg>

        <div class="messages">
            <div class="msg in cut-top">
                <div class="line"><span class="text">Muj se jhut</span><span class="time">11:08 pm</span></div>
            </div>
            <div class="msg in next big">
                <div class="line">
                    <svg class="emoji" viewBox="0 0 92 92">
                        <circle cx="46" cy="46" r="45" fill="url(#faceFill)"/>
                        <ellipse cx="29" cy="34" rx="5" ry="7" fill="#6b3f12"/>
                        <ellipse cx="63" cy="34" rx="5" ry="7" fill="#6b3f12"/>
                        <path d="M28 58c6 10 14 13 24 14" fill="none" stroke="#6b3f12" stroke-width="4" stroke-linecap="round"/>
                        <path d="M64 38c2 10 12 21 12 29 0 6-5 11-12 11s-12-5-12-11c0-8 10-19 12-29Z" fill="url(#dropFill)"/>
                    </svg>
                    <span class="time">11:08 pm</span>
                </div>
            </div>

            <div class="msg out first">
                <div class="reply"><span class="reply-name">Vandna</span><span class="reply-text">Muj se jhut</span></div>
                <div class="line after-reply">
                    <span class="text">Kuch ni</span>
                    <span class="time">11:08 pm</span>
                    <svg class="ticks" viewBox="0 0 41 26"><path d="M1 16l8 8L25 2M16 21l3 3L40 2" fill="none" stroke="#53bdeb" stroke-width="3.5"/></svg>
                </div>
            </div>

            <div class="msg in first">
                <div class="line"><span class="text">Say j*** &nbsp;***</span><span class="time">11:08 pm</span></div>
            </div>
            <div class="msg in next big">
                <div class="line">
                    <svg class="emoji" viewBox="0 0 92 92">
                        <circle cx="48" cy="47" r="45" fill="url(#faceFill)"/>
                        <path d="M25 34c3-7 11-7 14 0M57 34c3-7 11-7 14 0" fill="none" stroke="#7a4a15" stroke-width="5"/>
                        <path d="M12 46c20 4 52 4 72 0 0 24-16 40-36 40S12 70 12 46Z" fill="#6b3510"/>
                        <path d="M12 46c20 4 52 4 72 0 0 3-1 6-2 9-20 4-48 4-68 0-1-3-2-6-2-9Z" fill="#fff"/>
                        <ellipse cx="48" cy="78" rx="15" ry="6" fill="#f0798a"/>
                        <path d="M13 0c4 12 12 19 12 26 0 7-5 11-12 11S1 33 1 26C1 19 9 12 13 0Z" fill="url(#dropFill)"/>
                    </svg>
                    <span class="time">11:08 pm</span>
                </div>
            </div>

            <div class="msg out first tall">
                <div class="line">
                    <span class="text">Jaan I love you</span>
                    <svg class="mark" viewBox="0 0 100 126"><use href="#heartMark"/></svg>
                    <span class="time">11:08 pm</span>
                    <svg class="ticks" viewBox="0 0 41 26"><path d="M1 16l8 8L25 2M16 21l3 3L40 2" fill="none" stroke="#53bdeb" stroke-width="3.5"/></svg>
                </div>
            </div>

            <div class="msg in first tall has-reaction">
                <div class="line">
                    <span class="text">I love you 2</span>
                    <svg class="sparkle-heart" viewBox="0 0 60 56">
                        <path d="M30 54C10 40 0 30 0 16 0 6 8 0 16 0c6 0 11 3 14 8 3-5 8-8 14-8 8 0 16 6 16 16 0 14-10 24-30 38Z" fill="url(#pinkFill)"/>
                        <path d="M11 3c1 6 3 9 8 11-5 1-7 4-8 10-1-6-3-9-9-10 6-2 8-5 9-11Z" fill="#ffe27a"/>
                        <path d="M45 24c1 9 4 13 13 15-9 2-12 6-13 16-1-10-4-14-13-16 9-2 12-6 13-15Z" fill="#ffd65c"/>
                    </svg>
                    <svg class="rose" viewBox="0 0 46 60">
                        <path d="M22 40c0 6 1 12 2 19M22 46c-4-2-10 0-13 4M24 46c4-2 9-3 11-7" fill="none" stroke="#4f9a2a" stroke-width="3"/>
                        <path d="M23 1c10-1 20 8 22 18 1 11-8 24-21 25C12 44 3 36 1 25-1 14 9 3 23 1Z" fill="#c8141f"/>
                        <path d="M23 8c7 0 12 6 11 12-1 7-6 11-12 10-6-1-9-6-8-12 1-6 4-10 9-10Z" fill="#e2323a"/>
                        <path d="M18 18c1-5 8-7 11-2 2 5-3 9-7 8-3-1-5-3-4-6ZM7 26c4 8 13 13 24 11M36 10c4 8 3 16-2 22" fill="none" stroke="#8e0b15" stroke-width="2"/>
                    </svg>
                    <span class="time">11:09 pm</span>
                </div>
                <div class="reaction"><svg width="48" height="43" viewBox="0 0 100 92"><use href="#heart"/></svg></div>
            </div>
            <div class="msg in big after-reaction">
                <div class="line">
                    <svg class="emoji" viewBox="0 0 92 92">
                        <ellipse cx="46" cy="40" rx="38" ry="40" fill="url(#hugFill)"/>
                        <path d="M22 36c3-8 13-8 16 0M54 36c3-8 13-8 16 0" fill="none" stroke="#7a4a15" stroke-width="5"/>
                        <path d="M28 50c6 8 30 8 36 0-2 10-10 14-18 14s-16-4-18-14Z" fill="#5a2d0c"/>
                        <path d="M1 62l10 2-6-10 12 7c4-6 10-8 13 0 4 8 8 22 0 28-10 4-22 2-26-8l-4-4 8 1-8-6 8 1Z" fill="#fcc12f" stroke="#e8911a" stroke-width="1"/>
                        <path d="M91 62l-10 2 6-10-12 7c-4-6-10-8-13 0-4 8-8 22 0 28 10 4 22 2 26-8l4-4-8 1 8-6-8 1Z" fill="#fcc12f" stroke="#e8911a" stroke-width="1"/>
                    </svg>
                    <span class="time">11:09 pm</span>
                </div>
            </div>

            <div class="msg out first">
                <div class="line">
                    <span class="text">Thik h</span>
                    <span class="time">11:09 pm</span>
                    <svg class="ticks" viewBox="0 0 41 26"><path d="M1 16l8 8L25 2M16 21l3 3L40 2" fill="none" stroke="#53bdeb" stroke-width="3.5"/></svg>
                </div>
            </div>

            <div class="msg in first">
                <div class="line"><span class="text">Thik h jayye</span><span class="time">11:09 pm</span></div>
            </div>
            <div class="msg in next">
                <div class="line"><span class="text">So jayye</span><span class="time">11:09 pm</span></div>
            </div>

            <div class="msg out first">
                <div class="reply"><span class="reply-name">Vandna</span><span class="reply-text">Thik h jayye</span></div>
                <div class="line after-reply">
                    <span class="text">Okgnsd</span>
                    <span class="time">11:09 pm</span>
                    <svg class="ticks" viewBox="0 0 41 26"><path d="M1 16l8 8L25 2M16 21l3 3L40 2" fill="none" stroke="#53bdeb" stroke-width="3.5"/></svg>
                </div>
            </div>

            <div class="msg in first peek"></div>
        </div>

        <div class="composer-row">
            <div class="composer">
                <svg width="56" height="56" viewBox="0 0 56 56">
                    <circle cx="28" cy="28" r="27.5" fill="#8696a0"/>
                    <ellipse cx="19" cy="21" rx="4.5" ry="6" fill="#1f2c34"/>
                    <ellipse cx="37" cy="21" rx="4.5" ry="6" fill="#1f2c34"/>
                    <path d="M9 30c12 3 26 3 38 0-1 12-9 19-19 19S10 42 9 30Z" fill="#1f2c34"/>
                    <path d="M14 34c9 2 19 2 28 0-2 4-3 6-5 6-6 1-12 1-18 0-2 0-4-2-5-6Z" fill="#8696a0"/>
                </svg>
                <span class="placeholder">Message</span>
                <svg class="translate" width="62" height="56" viewBox="0 0 62 56">
                    <path d="M0 11h43M21 2v9M8 11l23 32M31 11C28 24 18 36 6 44" fill="none" stroke="#8696a0" stroke-width="5"/>
                    <path d="M32 55L45 22h3l14 33M36 44h22" fill="none" stroke="#8696a0" stroke-width="4.5"/>
                </svg>
                <svg class="clip" width="58" height="54" viewBox="0 0 58 54">
                    <path d="M17 15L41 46c4 5 10 6 13 3s2-8-1-13L29 6C25 0 17-1 11 3 5 8 4 15 8 21l19 26M17 13l23 30" fill="none" stroke="#8696a0" stroke-width="4.5" stroke-linecap="round"/>
                </svg>
                <svg class="camera" width="54" height="52" viewBox="0 0 54 52">
                    <path d="M7 8h9l4-7h14l4 7h9c4 0 7 3 7 7v30c0 4-3 7-7 7H7c-4 0-7-3-7-7V15c0-4 3-7 7-7Z" fill="#8696a0"/>
                    <circle cx="27" cy="27" r="11.5" fill="none" stroke="#1f2c34" stroke-width="5"/>
                </svg>
            </div>
            <button class="mic">
                <svg width="42" height="56" viewBox="0 0 42 56">
                    <rect x="12" y="0" width="18" height="36" rx="9" fill="#e9edef"/>
                    <path d="M2 24c0 14 8 22 19 22s19-8 19-22" fill="none" stroke="#e9edef" stroke-width="4"/>
                    <path d="M21 44v12" stroke="#e9edef" stroke-width="4"/>
                </svg>
            </button>
        </div>

        <div class="pinned">
            <svg class="mark-small" viewBox="0 0 100 126"><use href="#heartMark"/></svg>
            <span class="pinned-word word-always">Always</span>
            <svg class="mark-small" viewBox="0 0 100 126"><use href="#heartMark"/></svg>
            <span class="pinned-word word-be">be</span>
            <svg class="mark-small" viewBox="0 0 100 126"><use href="#heartMark"/></svg>
            <span class="pinned-word word-happy">happy</span>
            <svg class="mark-small" viewBox="0 0 100 126"><use href="#heartMark"/></svg>
        </div>

        <button class="scroll-down">
            <svg width="34" height="30" viewBox="0 0 34 30"><path d="M2 2l15 11L32 2" fill="none" stroke="#a4b0b8" stroke-width="4"/><path d="M2 16l15 11 15-11" fill="none" stroke="#a4b0b8" stroke-width="4"/></svg>
        </button>
    </main>

    <div class="nav"><div class="home-pill"></div></div>
</body>
</html>
```

FILE: styles.css
```css
* {
    box-sizing: border-box;
}
body {
    margin: 0;
    width: 1080px;
    height: 2340px;
    overflow: hidden;
    background-color: #0b141a;
    font-family: Roboto, "Noto Sans", sans-serif;
    color: #e9edef;
}
.defs {
    position: absolute;
    width: 0;
    height: 0;
}

/* top bar */
.header {
    height: 230px;
    background-color: #1f2c34;
}
.status {
    display: flex;
    justify-content: space-between;
    align-items: center;
    height: 94px;
    padding: 0 62px 0 56px;
}
.status-text {
    font-size: 33.5px;
    font-weight: 500;
    color: #e9edef;
}
.status-icons {
    flex: none;
}
.lte {
    font-size: 13.5px;
    font-weight: 700;
    fill: #1f2c34;
    text-anchor: middle;
}
.four-g {
    font-size: 14px;
    fill: #e9edef;
    text-anchor: middle;
}
.batt {
    font-size: 24px;
    fill: #e9edef;
    text-anchor: middle;
}
.toolbar {
    display: flex;
    align-items: center;
    height: 116px;
    padding: 0 55px 0 22px;
}
.back {
    margin-right: 10px;
}
.tool-icons {
    display: flex;
    align-items: center;
    margin-left: auto;
}
.tool-phone {
    margin-left: 73px;
}
.tool-dots {
    margin-left: 81px;
}

/* chat area */
.chat {
    position: relative;
    height: 2066px;
    overflow: hidden;
}
.wallpaper {
    position: absolute;
    top: 0;
    left: 0;
}
.messages {
    position: relative;
    display: flex;
    flex-direction: column;
    height: 1916px;
    padding: 0 44px;
    overflow: hidden;
}
.msg {
    position: relative;
    flex: none;
    width: max-content;
    border-radius: 34px;
}
.msg.in {
    background-color: #1f2c34;
    align-self: flex-start;
}
.msg.out {
    background-color: #005c4b;
    align-self: flex-end;
}
.first {
    margin-top: 29px;
}
.next {
    margin-top: 7px;
}
.cut-top {
    margin-top: -22px;
    width: 443px;
}
.msg.in.first {
    border-top-left-radius: 0;
}
.msg.out.first {
    border-top-right-radius: 0;
}
.msg.in.first::before,
.msg.out.first::before {
    content: "";
    position: absolute;
    top: 0;
    width: 20px;
    height: 29px;
    background-color: inherit;
}
.msg.in.first::before {
    left: -19px;
    clip-path: polygon(20% 0, 100% 0, 100% 100%, 0 14%, 4% 4%);
}
.msg.out.first::before {
    right: -19px;
    clip-path: polygon(0 0, 80% 0, 96% 4%, 100% 14%, 0 100%);
}
.line {
    display: flex;
    align-items: flex-start;
    min-height: 88px;
    padding: 18px 25px 0 29px;
}
.in .line {
    padding-right: 24px;
}
.text {
    font-size: 44px;
    line-height: 50px;
    white-space: pre;
}
.time {
    align-self: flex-end;
    margin-left: 41px;
    margin-bottom: 9px;
    font-size: 33.5px;
    line-height: 36px;
    color: #8696a0;
    white-space: nowrap;
}
.out .time {
    margin-left: 21px;
    color: #8aa9a3;
}
.ticks {
    align-self: flex-end;
    flex: none;
    width: 41px;
    height: 26px;
    margin: 0 0 18px 11px;
}

/* big single emoji */
.big {
    width: 326px;
}
.big .line {
    justify-content: space-between;
    min-height: 153px;
    padding-top: 31px;
}
.emoji {
    flex: none;
    width: 92px;
    height: 92px;
}
.big .time {
    margin-left: 0;
}

/* taller rows with inline emoji */
.tall .line {
    min-height: 110px;
    padding-top: 28px;
}
.mark {
    flex: none;
    width: 46px;
    height: 62px;
    margin: -4px 0 0 20px;
}
.out .mark + .time {
    margin-left: 37px;
}
.sparkle-heart {
    flex: none;
    width: 60px;
    height: 56px;
    margin-top: -2px;
}
.rose {
    flex: none;
    width: 46px;
    height: 60px;
    margin: -2px 0 0 12px;
}
.rose + .time {
    margin-left: 53px;
}

/* reaction */
.reaction {
    position: absolute;
    left: 25px;
    top: 101px;
    display: flex;
    justify-content: center;
    align-items: center;
    width: 78px;
    height: 71px;
    border: 5px solid #0e181e;
    border-radius: 50%;
    background-color: #1f2c34;
}
.after-reaction {
    margin-top: 76px;
}

/* quoted message */
.reply {
    position: relative;
    display: flex;
    flex-direction: column;
    margin: 11px 11px 0;
    height: 132px;
    padding: 18px 0 0 33px;
    border-radius: 22px;
    background-color: #025144;
    overflow: hidden;
}
.reply::before {
    content: "";
    position: absolute;
    top: 0;
    bottom: 0;
    left: 0;
    width: 11px;
    background-color: #a791f9;
}
.reply-name {
    font-size: 39.5px;
    line-height: 44px;
    color: #a791f9;
}
.reply-text {
    margin-top: 6px;
    font-size: 39.5px;
    line-height: 53px;
    color: #8da5a2;
}
.after-reply {
    min-height: 89px;
}
.peek {
    width: 340px;
    height: 60px;
    margin-top: 32px;
}

/* message box */
.composer-row {
    position: relative;
    display: flex;
    align-items: center;
    margin-top: 10px;
    padding: 0 11px 0 14px;
}
.composer {
    display: flex;
    align-items: center;
    width: 912px;
    height: 124px;
    padding: 0 39px 0 31px;
    border-radius: 62px;
    background-color: #1f2c34;
}
.placeholder {
    margin-left: 31px;
    font-size: 50px;
    color: #8696a0;
}
.translate {
    margin-left: auto;
}
.clip {
    margin-left: 69px;
}
.camera {
    margin-left: 65px;
}
.mic {
    display: flex;
    justify-content: center;
    align-items: center;
    flex: none;
    width: 129px;
    height: 129px;
    margin-left: 14px;
    padding: 0;
    border: none;
    border-radius: 50%;
    background-color: #00a884;
}

/* pinned message strip */
.pinned {
    position: absolute;
    top: 0;
    left: 0;
    display: flex;
    align-items: center;
    width: 100%;
    height: 49px;
    padding: 5px 0 0 322px;
    background-color: rgba(6, 8, 9, 0.42);
}
.pinned-word {
    font-size: 36px;
    line-height: 44px;
    color: #fff;
}
.mark-small {
    flex: none;
    width: 31px;
    height: 39px;
}
.word-always {
    margin: 0 3px 0 9px;
}
.word-be {
    margin: 0 12px 0 16px;
}
.word-happy {
    margin: 0 12px 0 10px;
}
.scroll-down {
    position: absolute;
    top: 1817px;
    left: 959px;
    display: flex;
    justify-content: center;
    align-items: center;
    width: 88px;
    height: 88px;
    padding: 0;
    border: none;
    border-radius: 50%;
    background-color: #2a343b;
}

/* gesture bar */
.nav {
    display: flex;
    justify-content: center;
    height: 44px;
    padding-top: 17px;
}
.home-pill {
    width: 398px;
    height: 10px;
    border-radius: 5px;
    background-color: #fff;
}
```
